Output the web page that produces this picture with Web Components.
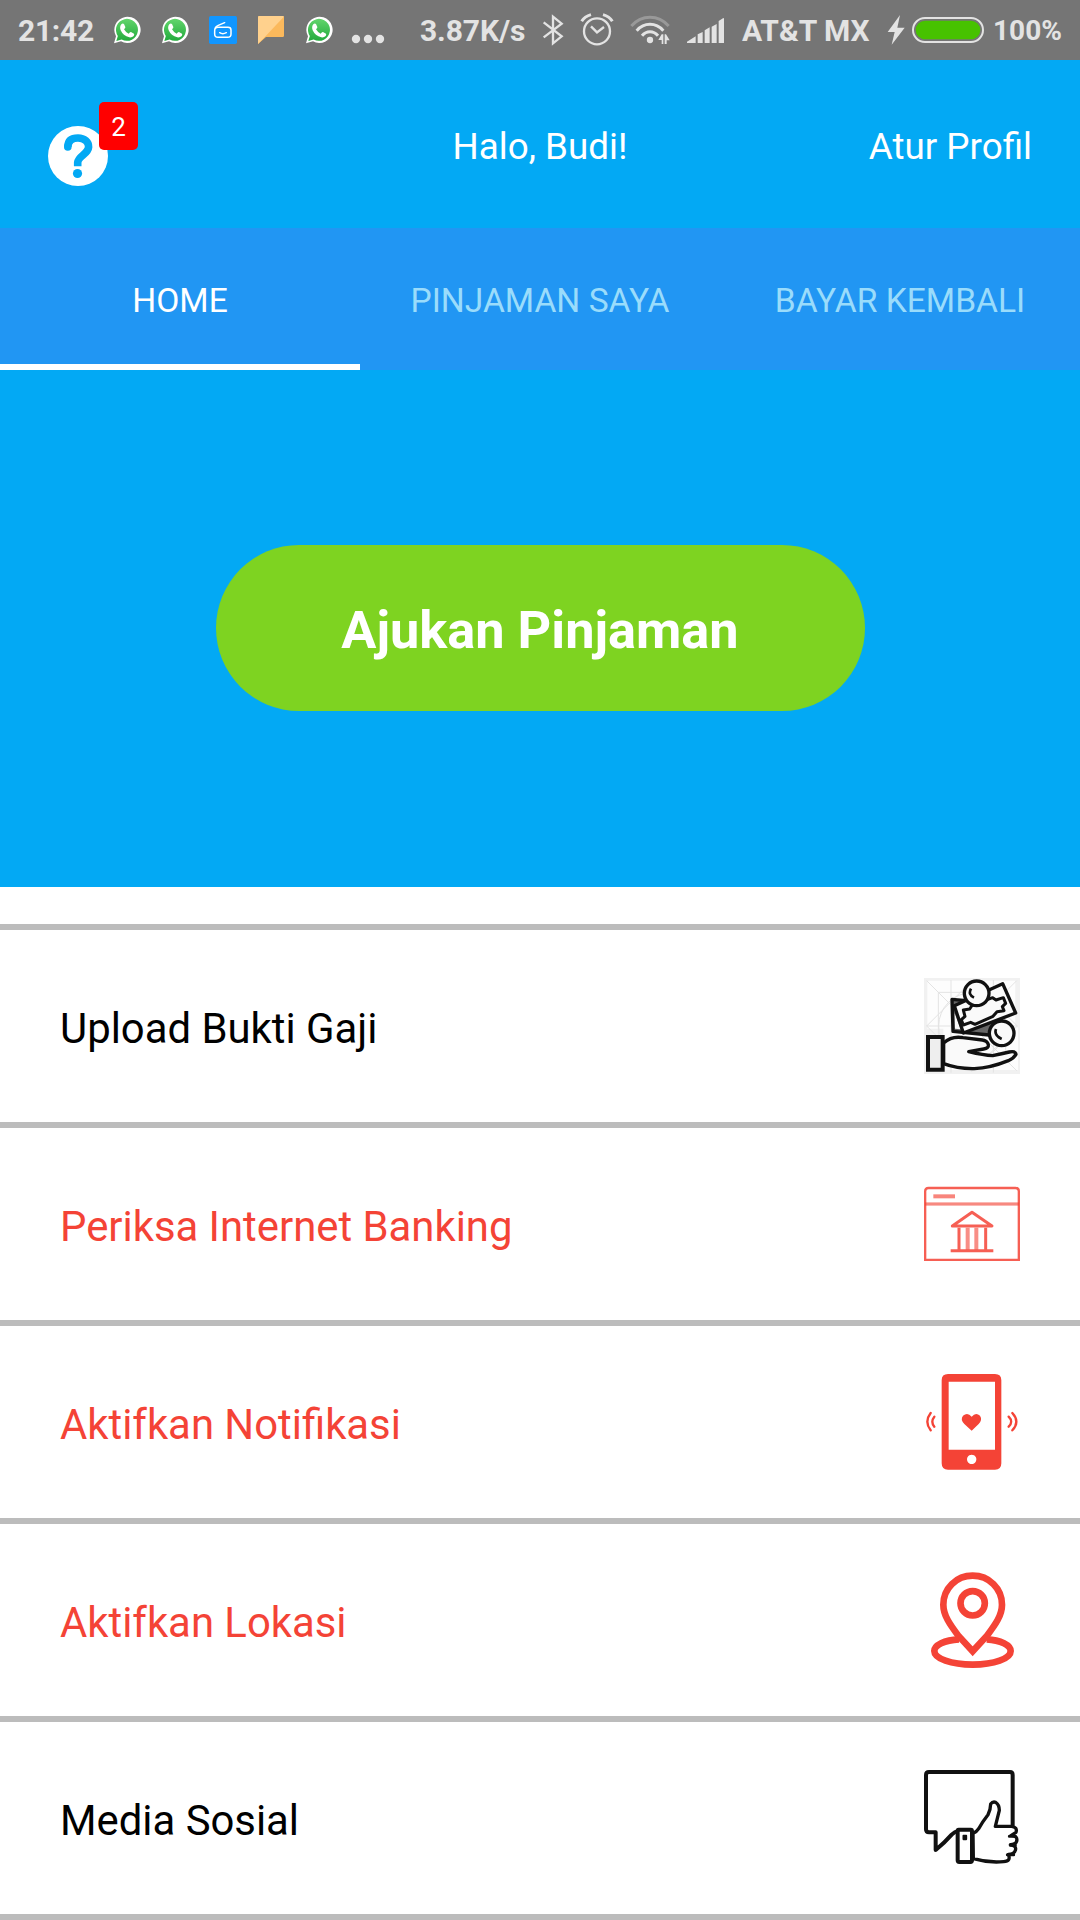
<!DOCTYPE html>
<html lang="id">
<head>
<meta charset="utf-8">
<title>Pinjaman</title>
<style>
body{margin:0;background:#fff;font-family:Roboto,"Noto Sans",sans-serif;width:1080px;height:1920px;overflow:hidden}
</style>
</head>
<body>
<loan-app></loan-app>
<script>
const WA = `<svg viewBox="336 42 90 90"><defs><linearGradient id="g" x1="0" y1="0" x2="0" y2="1"><stop offset="0" stop-color="#62d56c"/><stop offset="1" stop-color="#22aa3c"/></linearGradient></defs><path fill="#fff" d="M342 130l6-21a39.500 39.500 0 1 1 15 15z"/><path fill="url(#g)" d="M349 123l4.500-15a33 33 0 1 1 11.500 10.500z"/><path fill="#fff" d="M364 73q4-4 8-1l4 9q1 3-4 7q5 9 14 13q4-6 7-5l9 5q2 2-1 7q-5 5-13 4q-19-5-26-21q-4-11 2-18z"/></svg>`;
const ICONS = {
  wa: WA,
  radio: `<svg viewBox="624 42 90 90"><rect x="627" y="48" width="84" height="84" rx="5" fill="#1196ff"/><g fill="none" stroke="#fff" stroke-width="4.500" stroke-linecap="round" stroke-linejoin="round"><path d="M654 82h30q9 0 9 8v12q0 10-10 10h-29q-10 0-10-10v-10q0-10 10-10z"/><path d="M646 84q1-5 7-7l21-9M659 98q9 6 20 0"/></g></svg>`,
  flag: `<svg viewBox="768 42 90 90"><path fill="#fbb95c" d="M778 48h70q4 0 4 4v55q0 4-4 4h-50l-24 21v-80q0-4 4-4z"/><path fill="#ffd18d" d="M778 48h70q3 0 3.500 2l-57 61-20.500 21v-80q0-4 4-4z"/></svg>`,
  dots: `<svg viewBox="1050 42 108 90" fill="#e3e3e3"><circle cx="1068" cy="117" r="12.500"/><circle cx="1104" cy="117" r="12.500"/><circle cx="1140" cy="117" r="12.500"/></svg>`,
  bt: `<svg viewBox="426 42 66 96"><path fill="none" stroke="#e3e3e3" stroke-width="7" d="M431 67l54 42-26 21V50l26 21-54 41"/></svg>`,
  alarm: `<svg viewBox="540 36 102 102" fill="none" stroke="#e3e3e3"><circle cx="591" cy="94" r="39" stroke-width="7"/><path stroke-width="7" d="M573 79l18 18 21-16"/><path stroke-width="9" d="M545 64q9-15 28-20M637 64q-9-15-28-20"/></svg>`,
  wifi: `<svg viewBox="690 42 120 96" fill="none" stroke="#e3e3e3" stroke-width="9"><path stroke="#999" d="M694 78q24-26 56-26t56 26"/><path d="M710 92q17-19 40-19t40 19M726 107q10-12 24-12t24 12"/><circle cx="750" cy="120" r="9.500" fill="#e3e3e3" stroke="none"/><path fill="#e3e3e3" stroke="none" d="M775 120l10-17h5v29h-5v-12zM794 103h4l11 18h-9v11h-6z"/></svg>`,
  signal: `<svg viewBox="858 48 117 84" fill="#e3e3e3"><path d="M861 129v-4l26-16v20zM893 129v-26l15-7v33zM914 129v-38l15-9v47zM935 129v-49l15-8v57zM956 129v-66l14-9q2 0 2 2v73z"/></svg>`,
  bolt: `<svg viewBox="468 42 60 96" fill="#e3e3e3"><path d="M510 45l-37 51h21l-9 38 39-51h-22z"/></svg>`,
  battery: `<svg viewBox="546 48 216 84"><rect x="549" y="54" width="210" height="72" rx="36" fill="none" stroke="#e3e3e3" stroke-width="6"/><rect x="557" y="62" width="194" height="56" rx="28" fill="#47c200"/></svg>`,
  help: `<svg viewBox="0 0 60 60"><circle cx="30" cy="30" r="30" fill="#fff"/><path fill="none" stroke="#03a9f4" stroke-width="7.600" d="M29.700 40.300V36.500C30 30 40.300 28 40.600 21c.2-5-4.100-9-10.600-9-6 0-10 2.500-10.200 8.800"/><circle cx="19.800" cy="20.900" r="3.800" fill="#03a9f4"/><circle cx="29.500" cy="47.500" r="4.600" fill="#03a9f4"/></svg>`,
  money: `<svg viewBox="72 54 288 288"><path fill="#f1f1f1" d="M72 54h288v288H72z"/><path fill="#fdfdfd" d="M86 62h260v134l8 8v126H130V206H82V66z"/><g fill="none" stroke="#e3e3e3" stroke-width="3"><path d="M80 62l270 270M350 62L80 332M115 97h202v202H115zM80 198L216 62l136 136-136 136zM153 60v278M280 60v278M80 198h272"/><circle cx="216" cy="198" r="100"/></g><g stroke="#111" stroke-width="10" stroke-linejoin="round" fill="#fafafa"><path fill="#666" d="M191 121l-35-3 3 96 108 11 43-58z"/><path fill="#fafafa" stroke="none" d="M164 160l18 48-17-2z"/><path d="M163 137l145-66 39 88-157 60z"/><path stroke-width="9" d="M190 150l19-3 8-12 61-22 10 7 22-7 7 17-10 10 5 12-21 3-12 14-54 24-13-6-22 8-6-16 11-10z"/><circle cx="230" cy="100" r="37"/><circle cx="305" cy="220" r="37"/><path fill="none" stroke-width="8" d="M213 86q-10 18 9 27M288 207q-7 19 17 30"/><path d="M131 249q24-22 58-16l58 7q15 2 18 14 2 11-14 13l-45 8q45 11 72 12 28-6 50-11 18-4 20 7-7 12-23 19-54 22-102 24-50 1-92-15z"/><path stroke-width="12" stroke-linejoin="miter" fill="#eee" d="M84 231h44v98H84z"/></g></svg>`,
  bank: `<svg viewBox="72 48 288 288" fill="none" stroke="#f44336"><path stroke-opacity=".85" stroke-width="7" d="M75.500 299.500V94q0-10 10-10h261q10 0 10 10v205.500z"/><path stroke-opacity=".5" stroke-width="11" d="M75 132h282"/><path stroke-opacity=".5" stroke-width="3" d="M75 132h282"/><path stroke-opacity=".65" stroke-width="12" d="M100 109h65"/><g stroke-opacity=".85" stroke-width="9"><path d="M157 198l59-41 60 41z" stroke-linejoin="round"/><path d="M177 203v66M257 203v66M152 272h128"/><path stroke-opacity=".6" stroke-width="12" d="M203 203v66M229 203v66"/></g></svg>`,
  phone: `<svg viewBox="72 72 288 288"><path fill="#f44336" fill-rule="evenodd" d="M144 72h141q19 0 19 19v249q0 19-19 19H144q-19 0-19-19V91q0-19 19-19zM146 95v204h139V95zM215 314a14 14 0 1 0 .1 0z"/><path fill="#f44336" d="M215 242l-22-20q-13-14-4-25 14-11 26 3 12-14 25-3 8 12-4 25z"/><g fill="none" stroke="#f44336" stroke-width="7" stroke-linecap="round"><path d="M92 189q-20 26 0 52M103 200q-12 15 0 30M337 189q24 26 0 52M326 200q15 15 0 30"/></g></svg>`,
  pin: `<svg viewBox="72 66 288 288" fill="none" stroke="#f44336" stroke-width="20"><path d="M177 268c-44 2-74 18-74 35 0 23 51 41 115 41s114-18 114-41c0-17-30-33-72-35"/><path fill="#fff" d="M218 304l-43-47c-25-33-45-61-45-93 0-49 39-87 88-87s88 38 88 87c0 32-20 60-45 93z"/><circle cx="218" cy="160" r="36.500"/></svg>`,
  social: `<svg viewBox="72 60 288 288" fill="none" stroke="#111" stroke-width="12" stroke-linejoin="round" stroke-linecap="round"><path d="M338 226V75q0-9-8-9H87q-9 0-9 9v163q0 9 9 9h20v53q29-24 48-46 9-9 21-12"/><path stroke-width="10" fill="#fff" d="M219 250q10-3 17-14 10-19 28-42 8-17 8-32 6-8 15-5 11 7 11 24l-12 48h49q18 3 13 18l-14 9q20 2 16 18-3 10-19 10 20 4 15 17-3 11-21 12 9 21-14 22-47 4-91-9z"/><path d="M322 314h19M331 286h15M328 259h18" stroke-width="9"/><path fill="#fff" stroke-width="12" d="M176 239h36q4 0 4 4v88q0 5-5 5h-33q-5 0-5-5v-88q0-4 3-4z"/><path fill="#111" stroke-width="5" d="M190 257h9v11h-9z"/></svg>`
};
const define = (tag, html) => customElements.define(tag, class extends HTMLElement {
  connectedCallback() {
    if (this.shadowRoot) return;
    const root = this.attachShadow({ mode: "open" });
    root.innerHTML = typeof html === "function" ? html(this) : html;
  }
});

/* Icon: name picks the drawing, its box comes from the user's width and height. */
define("ui-icon", el => `<style>:host{display:block;flex:none}svg{display:block;width:100%;height:100%}</style>${ICONS[el.getAttribute("name")]}`);

define("status-bar", `<style>
:host{display:flex;height:60px;background:#757575;color:#e3e3e3;font-weight:700;font-size:30px;line-height:61px;white-space:nowrap}
span{flex:none;display:block}
.time{margin-left:18px;width:94px;letter-spacing:-.3px}
.app{width:30px;height:30px;margin:14px 18px 0 0}
.dots{width:36px;height:30px;margin:14px 34px 0 -2px}
.speed{width:122px;letter-spacing:-.1px}
.bt{width:22px;height:32px;margin:14px 16px 0 0}
.alarm{width:34px;height:34px;margin:12px 16px 0 0}
.wifi{width:40px;height:32px;margin:14px 16px 0 0}
.signal{width:39px;height:28px;margin:16px 17px 0 0}
.carrier{width:144px}
.bolt{width:20px;height:32px;margin:14px 6px 0 0}
.battery{width:72px;height:28px;margin:16px 9px 0 0}
.pct{font-size:28px}
</style>
<span class="time">21:42</span>
<ui-icon class="app" name="wa"></ui-icon><ui-icon class="app" name="wa"></ui-icon><ui-icon class="app" name="radio"></ui-icon><ui-icon class="app" name="flag"></ui-icon><ui-icon class="app" name="wa"></ui-icon>
<ui-icon class="dots" name="dots"></ui-icon>
<span class="speed">3.87K/s</span>
<ui-icon class="bt" name="bt"></ui-icon><ui-icon class="alarm" name="alarm"></ui-icon><ui-icon class="wifi" name="wifi"></ui-icon><ui-icon class="signal" name="signal"></ui-icon>
<span class="carrier">AT&amp;T MX</span>
<ui-icon class="bolt" name="bolt"></ui-icon><ui-icon class="battery" name="battery"></ui-icon>
<span class="pct">100%</span>`);

define("app-header", `<style>
:host{display:grid;grid-template-columns:1fr auto 1fr;align-items:center;height:168px;box-sizing:border-box;padding:0 48px;background:#03a9f4;color:#fff;font-size:36.800px;line-height:44px}
.help{position:relative;width:60px;height:60px;margin-top:24px}
ui-icon{width:60px;height:60px}
.badge{position:absolute;left:51px;top:-24px;width:39px;height:48px;border-radius:5px;background:#f00;font-size:26px;line-height:50px;text-align:center}
.t{padding-top:5px}
.r{text-align:right}
</style>
<div class="help"><ui-icon name="help"></ui-icon><span class="badge">2</span></div>
<div class="t"><slot name="title"></slot></div><div class="t r"><slot name="action"></slot></div>`);

define("tab-item", `<style>
:host{display:flex;flex:1 1 0;align-items:center;justify-content:center;box-sizing:border-box;padding-top:9px;border-bottom:6px solid transparent;font-size:33.600px;line-height:40px;color:#9adcfb;white-space:nowrap}
:host([active]){color:#fff;border-bottom-color:#fff}
</style><slot></slot>`);

define("tab-bar", `<style>:host{display:flex;height:142px;background:#2196f3}</style><slot></slot>`);

define("hero-panel", `<style>
:host{display:flex;height:517px;box-sizing:border-box;padding-bottom:1px;align-items:center;justify-content:center;background:#03a9f4}
button{width:649px;height:166px;border:0;border-radius:83px;background:#7ed321;color:#fff;font:700 52.300px/60px Roboto,sans-serif;padding:3px 0 0}
</style><button><slot></slot></button>`);

define("menu-row", el => `<style>
:host{display:flex;height:198px;box-sizing:border-box;border-bottom:6px solid #bcbcbc;padding:0 60px;align-items:center;justify-content:space-between;font-size:41.850px;line-height:50px;color:#000}
:host([alert]){color:#f44336}
span{padding-top:5px}
ui-icon{width:96px;height:96px}
</style><span><slot></slot></span><ui-icon name="${el.getAttribute("icon")}"></ui-icon>`);

define("menu-list", `<style>:host{display:block;margin-top:37px;border-top:6px solid #bcbcbc}</style><slot></slot>`);

define("loan-app", `<style>:host{display:block}</style>
<status-bar></status-bar>
<app-header><span slot="title">Halo, Budi!</span><span slot="action">Atur Profil</span></app-header>
<tab-bar><tab-item active>HOME</tab-item><tab-item>PINJAMAN SAYA</tab-item><tab-item>BAYAR KEMBALI</tab-item></tab-bar>
<hero-panel>Ajukan Pinjaman</hero-panel>
<menu-list>
<menu-row icon="money">Upload Bukti Gaji</menu-row>
<menu-row icon="bank" alert>Periksa Internet Banking</menu-row>
<menu-row icon="phone" alert>Aktifkan Notifikasi</menu-row>
<menu-row icon="pin" alert>Aktifkan Lokasi</menu-row>
<menu-row icon="social">Media Sosial</menu-row>
</menu-list>`);
</script>
</body>
</html>
